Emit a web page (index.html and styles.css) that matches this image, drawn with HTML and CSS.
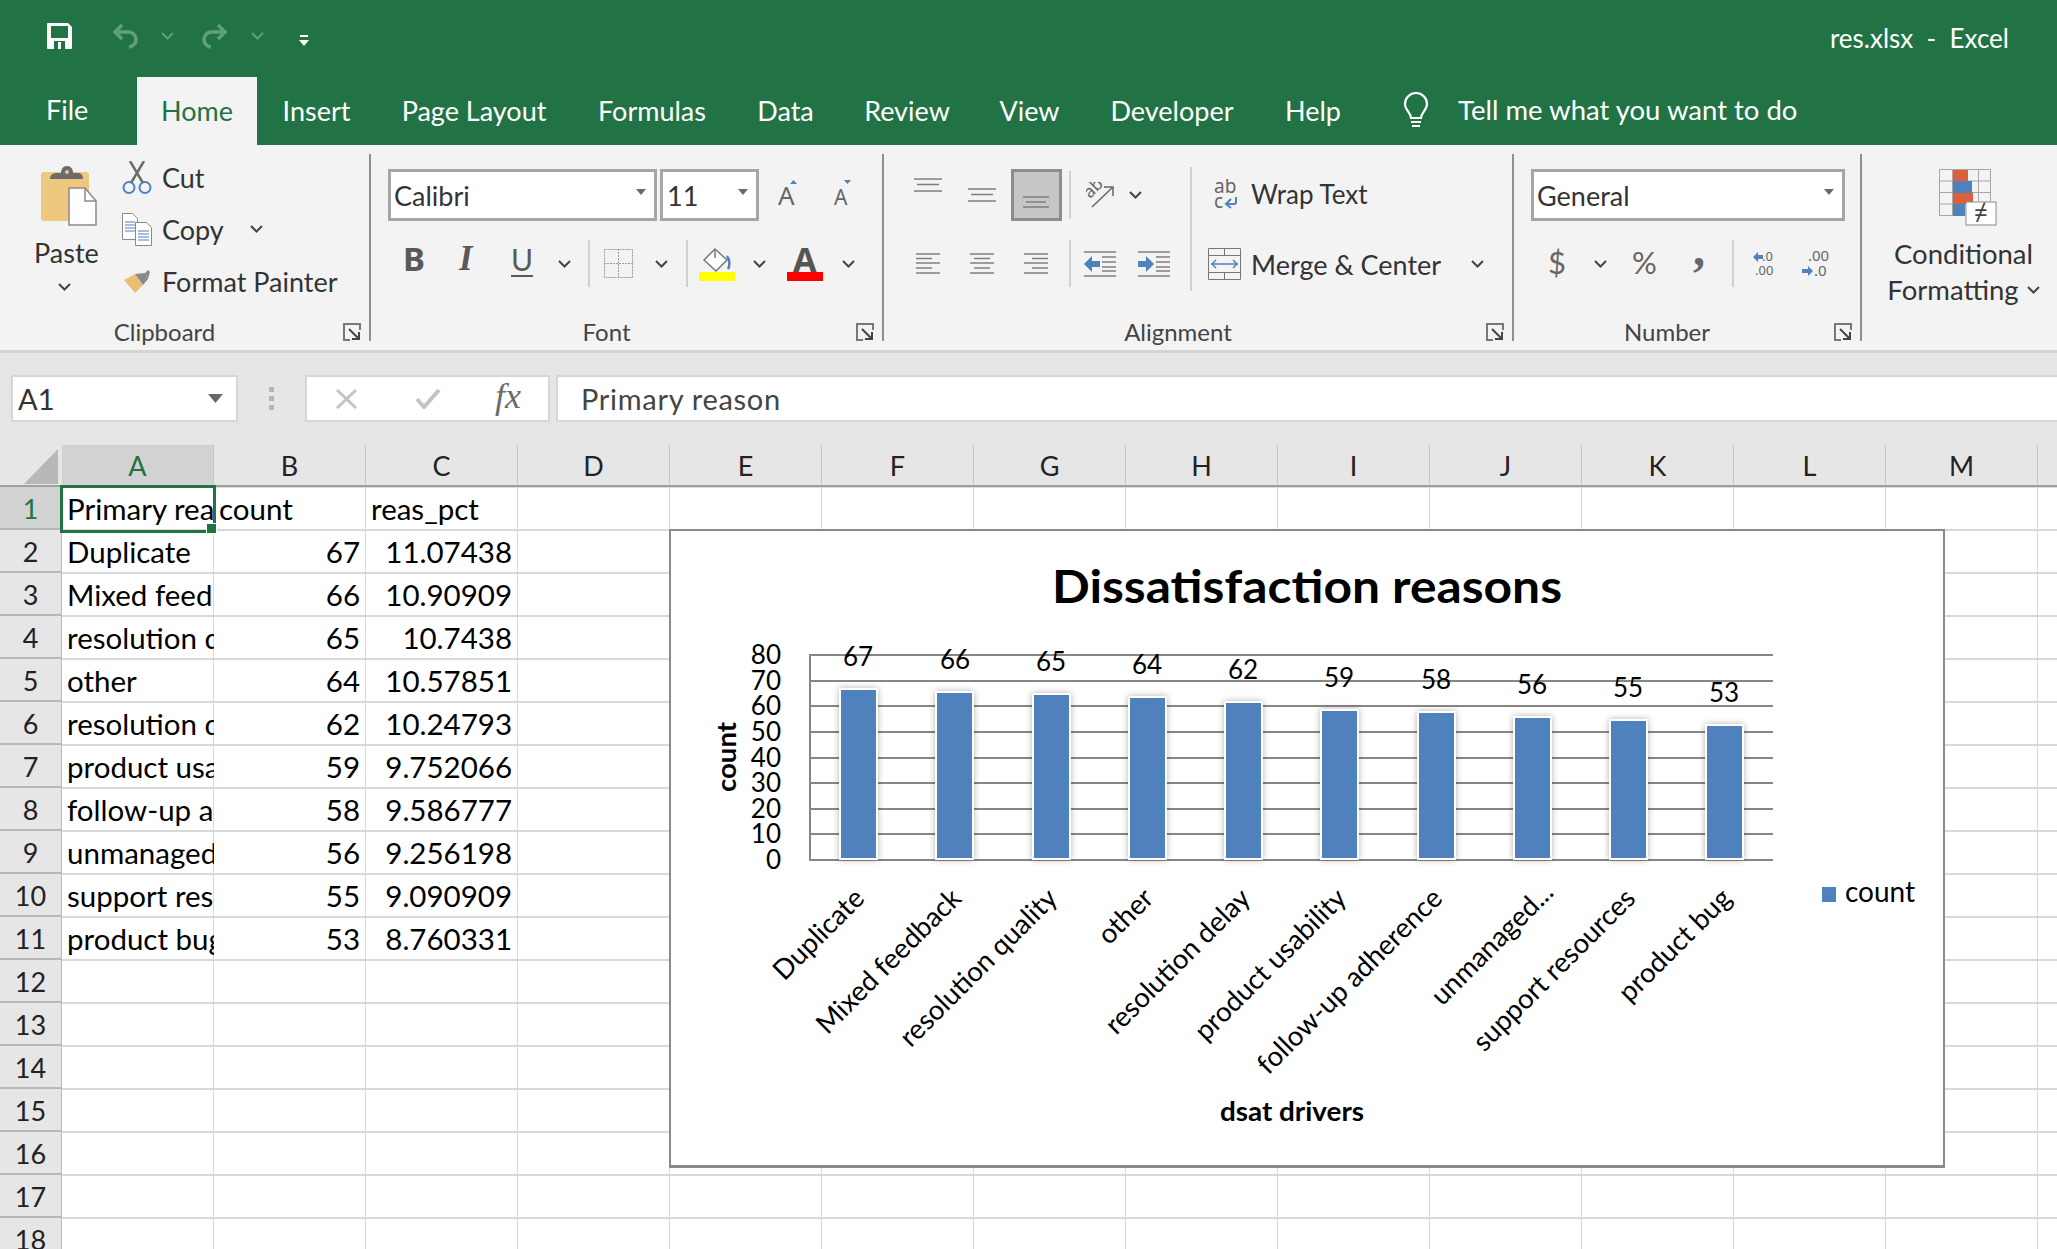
FILE: index.html
```html
<!DOCTYPE html>
<html lang="en">

<head>
    <title>res.xlsx - Excel</title>
    <link rel="stylesheet" href="styles.css">
</head>

<body>
    <svg class="sprite">
        <symbol id="chev" viewBox="0 0 13 8"><path d="M1 1l5.500 5.500L12 1" fill="none" stroke="currentColor" stroke-width="2"/></symbol>
        <symbol id="launcher" viewBox="0 0 18 18">
            <path d="M17 7V1H1v16h6" fill="none" stroke="#777" stroke-width="2"/>
            <path d="M6 6l10 10M16 9v7H9" fill="none" stroke="#444" stroke-width="2"/>
        </symbol>
        <symbol id="arrow" viewBox="0 0 10 6"><path d="M0 0h10L5 6z" fill="#6a6a6a"/></symbol>
    </svg>

    <header class="titlebar">
        <div class="qat">
            <svg class="save" width="25" height="26" viewBox="0 0 25 26">
                <path d="M1 0h20l4 4v21a1 1 0 0 1-1 1H1a1 1 0 0 1-1-1V1a1 1 0 0 1 1-1z" fill="#fff"/>
                <rect x="4" y="3" width="17" height="12" fill="#217346"/>
                <rect x="7" y="18" width="11" height="8" fill="#217346"/>
                <rect x="11" y="19" width="3" height="7" fill="#fff"/>
            </svg>
            <svg class="undo" width="26" height="26" viewBox="0 0 26 26"><path d="M10 2L3 9l7 7M3 9h13a7.500 7.500 0 0 1 1 15" fill="none" stroke="#5f9f7e" stroke-width="3.500"/></svg>
            <svg class="qat-chev" width="13" height="8"><use href="#chev"/></svg>
            <svg class="redo" width="26" height="26" viewBox="0 0 26 26"><path d="M16 2l7 7-7 7M23 9H10a7.500 7.500 0 0 0-1 15" fill="none" stroke="#5f9f7e" stroke-width="3.500"/></svg>
            <svg class="qat-chev" width="13" height="8"><use href="#chev"/></svg>
            <svg class="customize" width="10" height="11" viewBox="0 0 10 11"><path d="M1 1h8" stroke="#fff" stroke-width="2"/><path d="M0 5h10l-5 6z" fill="#fff"/></svg>
        </div>
        <div class="doc-title">res.xlsx&nbsp; -&nbsp; Excel</div>
    </header>

    <nav class="tabs">
        <div class="tab tab-file">File</div>
        <div class="tab tab-active">Home</div>
        <div class="tab">Insert</div>
        <div class="tab">Page Layout</div>
        <div class="tab">Formulas</div>
        <div class="tab">Data</div>
        <div class="tab">Review</div>
        <div class="tab">View</div>
        <div class="tab">Developer</div>
        <div class="tab">Help</div>
        <div class="tell">
            <svg width="26" height="36" viewBox="0 0 26 36"><path d="M8 26c0-5-6-8-6-14a11 11 0 0 1 22 0c0 6-6 9-6 14zM8 30h10M9 34h8" fill="none" stroke="#fff" stroke-width="2.200"/></svg>
            <span>Tell me what you want to do</span>
        </div>
    </nav>

    <section class="ribbon">
        <div class="group group-clipboard">
            <div class="group-body clipboard">
                <div class="paste">
                    <svg width="56" height="60" viewBox="0 0 56 60">
                        <rect x="0" y="6" width="48" height="49" rx="3" fill="#edc87e"/>
                        <path d="M9 13c0-4 3-6 7-6h4c0-4 2-7 6-7s6 3 6 7h5c3 0 5 2 5 6z" fill="#6b6b6b"/>
                        <circle cx="26" cy="6" r="2" fill="#edc87e"/>
                        <path d="M28 22h16l11 13v24H28z" fill="#fff" stroke="#8a8a8a" stroke-width="1.500"/>
                        <path d="M44 22v13h11" fill="none" stroke="#8a8a8a" stroke-width="1.500"/>
                    </svg>
                    <span class="paste-label">Paste</span>
                    <svg class="paste-chev" width="13" height="8"><use href="#chev"/></svg>
                </div>
                <div class="clip-list">
                    <div class="clip-row">
                        <svg width="30" height="33" viewBox="0 0 30 33">
                            <path d="M8 0l13 22M22 0L9 22" fill="none" stroke="#6e6e6e" stroke-width="2.500"/>
                            <circle cx="7" cy="26.500" r="5.500" fill="none" stroke="#4f81bd" stroke-width="2"/>
                            <circle cx="23" cy="26.500" r="5.500" fill="none" stroke="#4f81bd" stroke-width="2"/>
                        </svg>
                        <span>Cut</span>
                    </div>
                    <div class="clip-row">
                        <svg width="30" height="33" viewBox="0 0 30 33">
                            <path d="M.5.500h10l5 5v21H.5z" fill="#fff" stroke="#8a8a8a"/>
                            <path d="M3 9h10M3 12h10M3 15h10M3 18h10" stroke="#4f81bd"/>
                            <path d="M13.500 9.500h11l5 5v18h-16z" fill="#fff" stroke="#8a8a8a"/>
                            <path d="M16 18h11M16 21h11M16 24h11M16 27h11" stroke="#4f81bd"/>
                        </svg>
                        <span>Copy</span>
                        <svg class="clip-chev" width="13" height="8"><use href="#chev"/></svg>
                    </div>
                    <div class="clip-row">
                        <svg class="painter-icon" width="27" height="23" viewBox="0 0 27 23">
                            <path d="M0 10l11-6 8 11-8 8z" fill="#e8bf74"/>
                            <path d="M11 4l10-1 3 6-5 6z" fill="#8a8a8a"/>
                            <path d="M21 3l3-3 2 2-2 7z" fill="#8a8a8a"/>
                        </svg>
                        <span>Format Painter</span>
                    </div>
                </div>
            </div>
            <div class="group-foot">
                <span class="group-label">Clipboard</span>
                <svg class="launcher" width="18" height="18"><use href="#launcher"/></svg>
            </div>
        </div>

        <div class="group group-font">
            <div class="group-body">
                <div class="box-row">
                    <div class="combo combo-font"><span>Calibri</span><svg width="10" height="6"><use href="#arrow"/></svg></div>
                    <div class="combo combo-size"><span>11</span><svg width="10" height="6"><use href="#arrow"/></svg></div>
                    <svg class="grow-font" width="20" height="26" viewBox="0 0 20 26">
                        <text class="glyph-a" x="0" y="25" font-size="26">A</text>
                        <path d="M12 4l3.500-4L19 4z" fill="#4f81bd"/>
                    </svg>
                    <svg class="shrink-font" width="18" height="26" viewBox="0 0 18 26">
                        <text class="glyph-a" x="0" y="25" font-size="21">A</text>
                        <path d="M10 0h7l-3.500 4z" fill="#4f81bd"/>
                    </svg>
                </div>
                <div class="font-tools">
                    <span class="tool-b">B</span>
                    <span class="tool-i">I</span>
                    <span class="tool-u">U</span>
                    <svg width="13" height="8"><use href="#chev"/></svg>
                    <i class="sep"></i>
                    <svg width="29" height="29" viewBox="0 0 29 29"><path d="M.5.500h28v28H.5zM14.500 0v29M0 14.500h29" fill="none" stroke="#9a9a9a" stroke-dasharray="2 1"/></svg>
                    <svg width="13" height="8"><use href="#chev"/></svg>
                    <i class="sep"></i>
                    <svg width="36" height="34" viewBox="0 0 36 34">
                        <path d="M16 2l12 11-11 11L5 13z" fill="#fff" stroke="#7a7a7a" stroke-width="1.500"/>
                        <path d="M28 9c3 4 3 10 1 13" fill="none" stroke="#4f81bd" stroke-width="2.500"/>
                        <path d="M16 2v9" stroke="#7a7a7a" stroke-width="1.500"/>
                        <rect x="0" y="25" width="36" height="9" fill="#ffff00"/>
                    </svg>
                    <svg width="13" height="8"><use href="#chev"/></svg>
                    <svg width="36" height="34" viewBox="0 0 36 34">
                        <text class="glyph-a glyph-bold" x="6" y="25" font-size="34">A</text>
                        <rect x="0" y="25" width="36" height="9" fill="#ff0000"/>
                    </svg>
                    <svg width="13" height="8"><use href="#chev"/></svg>
                </div>
            </div>
            <div class="group-foot">
                <span class="group-label">Font</span>
                <svg class="launcher" width="18" height="18"><use href="#launcher"/></svg>
            </div>
        </div>

        <div class="group group-align">
            <div class="group-body align-body">
                <div class="align-left">
                    <div class="align-row-top">
                        <svg class="align-icon-top" width="28" height="14" viewBox="0 0 28 14"><path d="M0 1h28M3 6.500h22M0 13h28" stroke="#808080" stroke-width="1.500"/></svg>
                        <svg width="28" height="14" viewBox="0 0 28 14"><path d="M0 1h28M3 6.500h22M0 13h28" stroke="#808080" stroke-width="1.500"/></svg>
                        <div class="align-on"><svg width="26" height="12" viewBox="0 0 26 12"><path d="M0 1h26M3 6h20M0 11h26" stroke="#808080" stroke-width="1.500"/></svg></div>
                        <i class="sep sep-short"></i>
                        <svg width="28" height="26" viewBox="0 0 28 26">
                            <text class="glyph-ab" transform="translate(4 17) rotate(-45)" font-size="17">ab</text>
                            <path d="M6 25L27 5M18 5h9v9" fill="none" stroke="#666" stroke-width="1.500"/>
                        </svg>
                        <svg width="13" height="8"><use href="#chev"/></svg>
                    </div>
                    <div class="align-row-bottom">
                        <svg width="24" height="21" viewBox="0 0 24 21"><path d="M0 1h24M0 5.500h16M0 10h24M0 15h16M0 20h24" stroke="#808080" stroke-width="1.500"/></svg>
                        <svg width="24" height="21" viewBox="0 0 24 21"><path d="M0 1h24M4 5.500h16M0 10h24M4 15h16M0 20h24" stroke="#808080" stroke-width="1.500"/></svg>
                        <svg width="24" height="21" viewBox="0 0 24 21"><path d="M0 1h24M8 5.500h16M0 10h24M8 15h16M0 20h24" stroke="#808080" stroke-width="1.500"/></svg>
                        <i class="sep"></i>
                        <svg width="32" height="26" viewBox="0 0 32 26">
                            <path d="M0 1h32M18 6h14M18 11h14M18 16h14M18 20h14M0 25h32" stroke="#808080" stroke-width="1.500"/>
                            <path d="M0 13l8-8v5h8v6H8v5z" fill="#4f81bd"/>
                        </svg>
                        <svg width="32" height="26" viewBox="0 0 32 26">
                            <path d="M0 1h32M18 6h14M18 11h14M18 16h14M18 20h14M0 25h32" stroke="#808080" stroke-width="1.500"/>
                            <path d="M16 13l-8-8v5H0v6h8v5z" fill="#4f81bd"/>
                        </svg>
                    </div>
                </div>
                <div class="align-right">
                    <div class="wide-row">
                        <svg class="wrap-icon" width="24" height="30" viewBox="0 0 24 30">
                            <text class="glyph-ab" x="0" y="14" font-size="19">ab</text>
                            <text class="glyph-ab" x="0" y="29" font-size="19">c</text>
                            <path d="M22 18v5a2 2 0 0 1-2 2h-7M17 20l-5 5 5 4" fill="none" stroke="#4f81bd" stroke-width="2"/>
                        </svg>
                        <span class="wrap-label">Wrap Text</span>
                    </div>
                    <div class="wide-row">
                        <svg width="33" height="32" viewBox="0 0 33 32">
                            <path d="M.5.500h32v31H.5zM0 7.500h33M0 24.500h33M16.500 0v7.500M16.500 24.500V32" fill="none" stroke="#777"/>
                            <path d="M3 16h27M8 12l-4 4 4 4M25 12l4 4-4 4" fill="none" stroke="#4f81bd" stroke-width="1.500"/>
                        </svg>
                        <span>Merge &amp; Center</span>
                        <svg class="merge-chev" width="13" height="8"><use href="#chev"/></svg>
                    </div>
                </div>
            </div>
            <div class="group-foot">
                <span class="group-label">Alignment</span>
                <svg class="launcher" width="18" height="18"><use href="#launcher"/></svg>
            </div>
        </div>

        <div class="group group-number">
            <div class="group-body">
                <div class="box-row">
                    <div class="combo combo-number"><span>General</span><svg width="10" height="6"><use href="#arrow"/></svg></div>
                </div>
                <div class="number-tools">
                    <span class="tool-num">$</span>
                    <svg width="13" height="8"><use href="#chev"/></svg>
                    <span class="tool-num">%</span>
                    <span class="tool-comma">,</span>
                    <i class="sep"></i>
                    <svg width="22" height="26" viewBox="0 0 22 26">
                        <text class="glyph-dec" x="9" y="10" font-size="13">.0</text>
                        <text class="glyph-dec" x="2" y="24" font-size="13">.00</text>
                        <path d="M0 6l5-5v3h5v4H5v3z" fill="#4f81bd"/>
                    </svg>
                    <svg width="27" height="28" viewBox="0 0 27 28">
                        <text class="glyph-dec" x="6" y="11" font-size="15">.00</text>
                        <text class="glyph-dec" x="12" y="26" font-size="15">.0</text>
                        <path d="M11 21l-5-5v3H0v4h6v3z" fill="#4f81bd"/>
                    </svg>
                </div>
            </div>
            <div class="group-foot">
                <span class="group-label">Number</span>
                <svg class="launcher" width="18" height="18"><use href="#launcher"/></svg>
            </div>
        </div>

        <div class="group-styles">
            <svg width="58" height="57" viewBox="0 0 58 57">
                <path d="M.5.500h51v46H.5zM13.500 0v47M39.500 0v47M0 12h52M0 23.500h52M0 35h52" fill="none" stroke="#a6a6a6"/>
                <rect x="14" y="1" width="15" height="11" fill="#d9603b"/>
                <rect x="14" y="12" width="19" height="12" fill="#4f81bd"/>
                <rect x="14" y="24" width="20" height="11" fill="#d9603b"/>
                <rect x="14" y="35" width="12" height="12" fill="#4f81bd"/>
                <rect x="27" y="33" width="30" height="23" fill="#fff" stroke="#8a8a8a"/>
                <text class="glyph-ne" x="35" y="52" font-size="24">≠</text>
            </svg>
            <span class="styles-label">Conditional</span>
            <span class="styles-label">Formatting <svg width="13" height="8"><use href="#chev"/></svg></span>
        </div>
    </section>

    <section class="formula-bar">
        <div class="name-box"><span>A1</span><svg width="15" height="9"><use href="#arrow"/></svg></div>
        <div class="grip"><i></i><i></i><i></i></div>
        <div class="fx-box">
            <svg width="23" height="20" viewBox="0 0 23 20"><path d="M2 1l19 18M21 1L2 19" stroke="#c4c4c4" stroke-width="3"/></svg>
            <svg width="26" height="20" viewBox="0 0 26 20"><path d="M2 10l7 8L24 1" fill="none" stroke="#c4c4c4" stroke-width="4"/></svg>
            <span class="fx">fx</span>
        </div>
        <div class="formula-input">Primary reason</div>
    </section>

    <main class="sheet">
        <div class="col-heads">
            <div class="corner"><svg width="34" height="35" viewBox="0 0 34 35"><path d="M34 0v35H0z" fill="#b8b8b8"/></svg></div>
            <div class="col-head col-on">A</div>
            <div class="col-head">B</div>
            <div class="col-head">C</div>
            <div class="col-head">D</div>
            <div class="col-head">E</div>
            <div class="col-head">F</div>
            <div class="col-head">G</div>
            <div class="col-head">H</div>
            <div class="col-head">I</div>
            <div class="col-head">J</div>
            <div class="col-head">K</div>
            <div class="col-head">L</div>
            <div class="col-head">M</div>
        </div>
        <div class="cells">
            <div class="num num-on">1</div><div class="cell-active"><div class="cell">Primary reason</div><div class="cursor"></div></div><div class="cell">count</div><div class="cell">reas_pct</div>
            <div class="num">2</div><div class="cell">Duplicate</div><div class="cell val">67</div><div class="cell val">11.07438</div>
            <div class="num">3</div><div class="cell">Mixed feedback</div><div class="cell val">66</div><div class="cell val">10.90909</div>
            <div class="num">4</div><div class="cell">resolution quality</div><div class="cell val">65</div><div class="cell val">10.7438</div>
            <div class="num">5</div><div class="cell">other</div><div class="cell val">64</div><div class="cell val">10.57851</div>
            <div class="num">6</div><div class="cell">resolution delay</div><div class="cell val">62</div><div class="cell val">10.24793</div>
            <div class="num">7</div><div class="cell">product usability</div><div class="cell val">59</div><div class="cell val">9.752066</div>
            <div class="num">8</div><div class="cell">follow-up adherence</div><div class="cell val">58</div><div class="cell val">9.586777</div>
            <div class="num">9</div><div class="cell">unmanaged expectations</div><div class="cell val">56</div><div class="cell val">9.256198</div>
            <div class="num">10</div><div class="cell">support resources</div><div class="cell val">55</div><div class="cell val">9.090909</div>
            <div class="num">11</div><div class="cell">product bug</div><div class="cell val">53</div><div class="cell val">8.760331</div>
            <div class="num">12</div>
            <div class="num">13</div>
            <div class="num">14</div>
            <div class="num">15</div>
            <div class="num">16</div>
            <div class="num">17</div>
            <div class="num">18</div>
        </div>

        <div class="chart">
            <svg width="1272" height="634" viewBox="671 532 1272 634">
                <text class="chart-title" x="1307" y="604" text-anchor="middle" textLength="510" lengthAdjust="spacingAndGlyphs">Dissatisfaction reasons</text>

                <path class="grid-lines" d="M810 656H1773M810 682H1773M810 707H1773M810 733H1773M810 759H1773M810 784H1773M810 810H1773M810 835H1773M810 861H1773M810 655V862"/>

                <g class="axis-nums" text-anchor="end">
                    <text x="781" y="665">80</text>
                    <text x="781" y="691">70</text>
                    <text x="781" y="716">60</text>
                    <text x="781" y="742">50</text>
                    <text x="781" y="768">40</text>
                    <text x="781" y="793">30</text>
                    <text x="781" y="819">20</text>
                    <text x="781" y="844">10</text>
                    <text x="781" y="870">0</text>
                </g>

                <g class="bars">
                    <rect x="840" y="690" width="37" height="170"/>
                    <rect x="936" y="693" width="37" height="167"/>
                    <rect x="1033" y="695" width="37" height="165"/>
                    <rect x="1129" y="698" width="37" height="162"/>
                    <rect x="1225" y="703" width="37" height="157"/>
                    <rect x="1321" y="711" width="37" height="149"/>
                    <rect x="1418" y="713" width="37" height="147"/>
                    <rect x="1514" y="718" width="37" height="142"/>
                    <rect x="1610" y="721" width="37" height="139"/>
                    <rect x="1706" y="726" width="37" height="134"/>
                </g>

                <g class="bar-vals" text-anchor="middle">
                    <text x="858" y="667">67</text>
                    <text x="955" y="670">66</text>
                    <text x="1051" y="672">65</text>
                    <text x="1147" y="675">64</text>
                    <text x="1243" y="680">62</text>
                    <text x="1339" y="688">59</text>
                    <text x="1436" y="690">58</text>
                    <text x="1532" y="695">56</text>
                    <text x="1628" y="698">55</text>
                    <text x="1724" y="703">53</text>
                </g>

                <g class="cat-labels" text-anchor="end">
                    <text transform="translate(866 901) rotate(-45)">Duplicate</text>
                    <text transform="translate(963 901) rotate(-45)">Mixed feedback</text>
                    <text transform="translate(1059 901) rotate(-45)">resolution quality</text>
                    <text transform="translate(1155 901) rotate(-45)">other</text>
                    <text transform="translate(1252 901) rotate(-45)">resolution delay</text>
                    <text transform="translate(1348 901) rotate(-45)">product usability</text>
                    <text transform="translate(1444 901) rotate(-45)">follow-up adherence</text>
                    <text transform="translate(1555 895) rotate(-45)">unmanaged...</text>
                    <text transform="translate(1637 901) rotate(-45)">support resources</text>
                    <text transform="translate(1733 901) rotate(-45)">product bug</text>
                </g>

                <text class="axis-title" transform="translate(736 758) rotate(-90)" text-anchor="middle" textLength="70" lengthAdjust="spacingAndGlyphs">count</text>
                <text class="axis-title" x="1292" y="1122" text-anchor="middle" textLength="144" lengthAdjust="spacingAndGlyphs">dsat drivers</text>

                <rect x="1822" y="888" width="14" height="15" fill="#4f81bd"/>
                <text class="legend-text" x="1845" y="903">count</text>
            </svg>
        </div>
    </main>
</body>

</html>
```

FILE: styles.css
```css
* {
    box-sizing: border-box;
}

html,
body {
    margin: 0;
    height: 100%;
    overflow: hidden;
}

body {
    font-family: Lato, "Noto Sans", sans-serif;
    font-size: 27px;
    color: #333;
    background-color: #e6e6e6;
}

.sprite {
    position: absolute;
    width: 0;
    height: 0;
}

svg {
    display: block;
    flex: none;
    color: #444;
}

.titlebar {
    height: 77px;
    background-color: #217346;
    display: flex;
    align-items: center;
    justify-content: space-between;
    padding: 0 48px 0 47px;
    color: white;
}

.qat {
    display: flex;
    align-items: center;
    margin-top: -5px;
}

.undo {
    margin-left: 40px;
}

.qat-chev {
    margin-left: 23px;
    color: #5f9f7e;
}

.redo {
    margin-left: 28px;
}

.customize {
    margin-left: 35px;
    margin-top: 9px;
}

.doc-title {
    font-size: 26px;
    margin-top: -2px;
}

.tabs {
    height: 68px;
    background-color: #217346;
    color: white;
    display: grid;
    grid-template-columns: 137px 120px 119px 196px 160px 107px 136px 109px 176px 106px 1fr;
    align-items: center;
    justify-items: center;
}

.tab {
    line-height: 68px;
}

.tab-file {
    justify-self: start;
    padding-left: 46px;
    margin-top: -2px;
}

.tab-active {
    width: 100%;
    text-align: center;
    background-color: #f3f3f3;
    color: #217346;
}

.tell {
    justify-self: start;
    display: flex;
    align-items: center;
    gap: 29px;
    margin-left: 37px;
    margin-top: -3px;
    font-size: 27.500px;
}

.ribbon {
    height: 208px;
    background-color: #f3f3f3;
    border-bottom: 3px solid #d4d4d4;
    display: flex;
    font-size: 27px;
    padding-top: 9px;
}

.group {
    height: 187px;
    border-right: 2px solid #8f8f8f;
    display: flex;
    flex-direction: column;
}

.group-clipboard {
    width: 371px;
}

.group-font {
    width: 513px;
}

.group-align {
    width: 630px;
}

.group-number {
    width: 348px;
}

.group-body {
    height: 166px;
    padding-top: 15px;
}

.group-foot {
    height: 21px;
    padding-top: 6px;
    display: flex;
}

.group-label {
    flex: 1;
    line-height: 12px;
    text-align: center;
    font-size: 24px;
    color: #444;
}

.launcher {
    margin: -3px 8px 0 14px;
}

/* clipboard */

.clipboard {
    display: flex;
    padding-top: 0;
}

.paste {
    width: 122px;
    padding: 12px 0 0 41px;
}

.paste-label {
    display: block;
    line-height: 30px;
    margin: 12px 0 0 -7px;
}

.paste-chev {
    margin: 15px 0 0 17px;
}

.clip-list {
    margin-top: -3px;
}

.clip-row {
    height: 52px;
    display: flex;
    align-items: center;
}

.clip-row span {
    margin-left: 10px;
}

.painter-icon {
    margin: 0 1px 0 2px;
}

.clip-chev {
    margin: 0 0 0 26px;
}

/* combos */

.box-row {
    display: flex;
    align-items: center;
    height: 52px;
    padding-left: 17px;
}

.combo {
    height: 52px;
    background-color: white;
    border: 3px solid #a6a6a6;
    display: flex;
    align-items: center;
    justify-content: space-between;
    padding: 0 8px 0 3px;
}

.combo svg {
    margin-top: -6px;
}

.combo-font {
    width: 269px;
}

.combo-size {
    width: 99px;
    margin-left: 3px;
    padding-left: 4px;
}

.combo-number {
    width: 314px;
}

.grow-font {
    margin-left: 19px;
    margin-top: -4px;
}

.shrink-font {
    margin-left: 36px;
    margin-top: -4px;
}

.glyph-a {
    font-family: "Noto Sans", sans-serif;
    fill: #666;
}

.glyph-bold {
    font-weight: 700;
    fill: #555;
}

.glyph-ab {
    font-family: "Noto Sans", sans-serif;
    fill: #666;
}

.glyph-dec {
    font-family: "Noto Sans", sans-serif;
    fill: #666;
}

.glyph-ne {
    font-family: "Noto Sans", sans-serif;
    fill: #444;
}

/* toolbar rows */

.font-tools,
.number-tools {
    display: grid;
    align-items: center;
    height: 47px;
    margin-top: 19px;
}

.font-tools {
    grid-template-columns: 56px 52px 47px 30px 16px 51px 31px 13px 54px 34px 55px 13px;
    margin-left: 32px;
}

.number-tools {
    grid-template-columns: 46px 38px 61px 39px 21px 49px 1fr;
    margin-left: 34px;
}

.sep {
    display: block;
    width: 2px;
    height: 47px;
    background-color: #d0d0d0;
}

.sep-short {
    height: 48px;
}

.tool-b {
    font: 700 33px "Noto Sans", sans-serif;
    color: #595959;
    margin-top: -10px;
}

.tool-i {
    font: italic 700 35px "Liberation Serif", serif;
    color: #595959;
    margin-top: -9px;
}

.tool-u {
    font-size: 30px;
    color: #595959;
    text-decoration: underline;
    text-underline-offset: 4px;
    text-decoration-thickness: 2px;
    margin-top: -10px;
}

.tool-num {
    font-size: 31px;
    color: #666;
    margin-top: -4px;
}

.tool-comma {
    font: 700 48px "Liberation Serif", serif;
    color: #666;
    margin-top: -30px;
}

/* alignment */

.align-body {
    display: flex;
    padding-top: 0;
}

.align-left {
    width: 306px;
    padding-top: 15px;
}

.align-row-top {
    display: grid;
    grid-template-columns: 54px 43px 58px 17px 43px 1fr;
    align-items: center;
    height: 52px;
    margin-left: 30px;
}

.align-icon-top {
    align-self: start;
    margin-top: 9px;
}

.align-on {
    width: 51px;
    height: 52px;
    background-color: #c6c6c6;
    border: 3px solid #8d8d8d;
    padding: 24px 0 0 9px;
}

.align-row-bottom {
    display: grid;
    grid-template-columns: 54px 54px 45px 15px 54px 1fr;
    align-items: center;
    height: 47px;
    margin: 19px 0 0 32px;
}

.align-right {
    flex: 1;
    height: 124px;
    margin-top: 13px;
    border-left: 2px solid #d0d0d0;
    padding-left: 16px;
}

.wide-row {
    height: 60px;
    display: flex;
    align-items: center;
    margin-top: -3px;
}

.wide-row+.wide-row {
    margin-top: 10px;
}

.wide-row span {
    margin-left: 10px;
}

.wide-row .wrap-label {
    font-size: 26px;
}

.wrap-icon {
    margin: 0 3px 0 6px;
}

.merge-chev {
    margin-left: 30px;
}

/* styles */

.group-styles {
    flex: 1;
    display: flex;
    flex-direction: column;
    align-items: center;
    padding: 15px 0 0 8px;
}

.group-styles>svg {
    margin-left: 8px;
}

.styles-label {
    display: flex;
    align-items: center;
    gap: 8px;
    line-height: 36px;
    font-size: 27.500px;
}

.group-styles>svg+.styles-label {
    margin-top: 10px;
}

/* formula bar */

.formula-bar {
    height: 92px;
    padding-top: 22px;
    display: flex;
}

.name-box,
.fx-box,
.formula-input {
    height: 47px;
    background-color: white;
    border: 2px solid #d6d6d6;
}

.name-box {
    width: 227px;
    margin-left: 11px;
    display: flex;
    align-items: center;
    justify-content: space-between;
    padding: 0 13px 0 5px;
    font-size: 29px;
}

.grip {
    width: 5px;
    margin: 12px 0 0 31px;
    display: flex;
    flex-direction: column;
    gap: 4px;
}

.grip i {
    display: block;
    height: 5px;
    background-color: #b5b5b5;
}

.fx-box {
    width: 245px;
    margin-left: 31px;
    display: grid;
    grid-template-columns: 80px 79px 1fr;
    align-items: center;
    padding-left: 28px;
}

.fx {
    font: italic 36px "Liberation Serif", serif;
    color: #6b6b6b;
    margin: -6px 0 0 1px;
}

.formula-input {
    flex: 1;
    margin-left: 6px;
    padding-left: 23px;
    line-height: 43px;
    border-right: none;
    color: #444;
    font-size: 29px;
    letter-spacing: .7px;
}

/* sheet */

.sheet {
    position: relative;
}

.col-heads {
    display: flex;
    height: 42px;
    border-bottom: 2px solid #a0a0a0;
}

.corner {
    width: 62px;
    flex: none;
    padding: 4px 0 0 24px;
}

.col-head {
    width: 152px;
    flex: none;
    text-align: center;
    line-height: 42px;
    border-right: 1px solid #c6c6c6;
    color: #222;
}

.col-on {
    background-color: #d2d2d2;
    color: #217346;
}

.cells {
    display: grid;
    grid-template-columns: 62px 152px 152px 152px;
    grid-auto-rows: 43px;
    background-color: white;
    background-image: linear-gradient(to bottom, transparent 41px, #d9d9d9 41px),
        linear-gradient(to right, transparent 151px, #d9d9d9 151px);
    background-size: 100% 43px, 152px 100%;
    background-position: 0 1px, 62px 0;
    height: 762px;
    color: black;
    font-size: 29.500px;
}

.num {
    grid-column: 1;
    background-color: #e6e6e6;
    border-bottom: 2px solid #b8b8b8;
    border-right: 1px solid #b8b8b8;
    text-align: center;
    line-height: 43px;
    color: #222;
    font-size: 27px;
}

.num-on {
    background-color: #d2d2d2;
    color: #217346;
}

.cell {
    padding: 0 6px 0 5px;
    line-height: 43px;
    white-space: nowrap;
    overflow: hidden;
}

.val {
    text-align: right;
}

.cell-active {
    position: relative;
    min-width: 0;
}

.cursor {
    position: absolute;
    top: -2px;
    left: -2px;
    right: -2px;
    bottom: -3px;
    border: 3px solid #217346;
}

.cursor::after {
    content: "";
    position: absolute;
    right: -4px;
    bottom: -4px;
    width: 9px;
    height: 9px;
    background-color: #217346;
    border: 1px solid white;
}

/* chart */

.chart {
    position: absolute;
    left: 669px;
    top: 84px;
    width: 1276px;
    height: 639px;
    background-color: white;
    border: 2px solid #8a8a8a;
    border-bottom-width: 3px;
}

.chart-title {
    font-size: 46px;
    font-weight: 700;
}

.grid-lines {
    fill: none;
    stroke: #868686;
    stroke-width: 2;
}

.axis-nums {
    font-size: 26px;
}

.bar-vals {
    font-size: 26px;
}

.cat-labels {
    font-size: 27.500px;
}

.bars rect {
    fill: #4f81bd;
    stroke: white;
    stroke-width: 2;
    filter: drop-shadow(0 0 3px rgba(0, 0, 0, .3));
}

.axis-title {
    font-size: 26px;
    font-weight: 700;
}

.legend-text {
    font-size: 28px;
}
```
